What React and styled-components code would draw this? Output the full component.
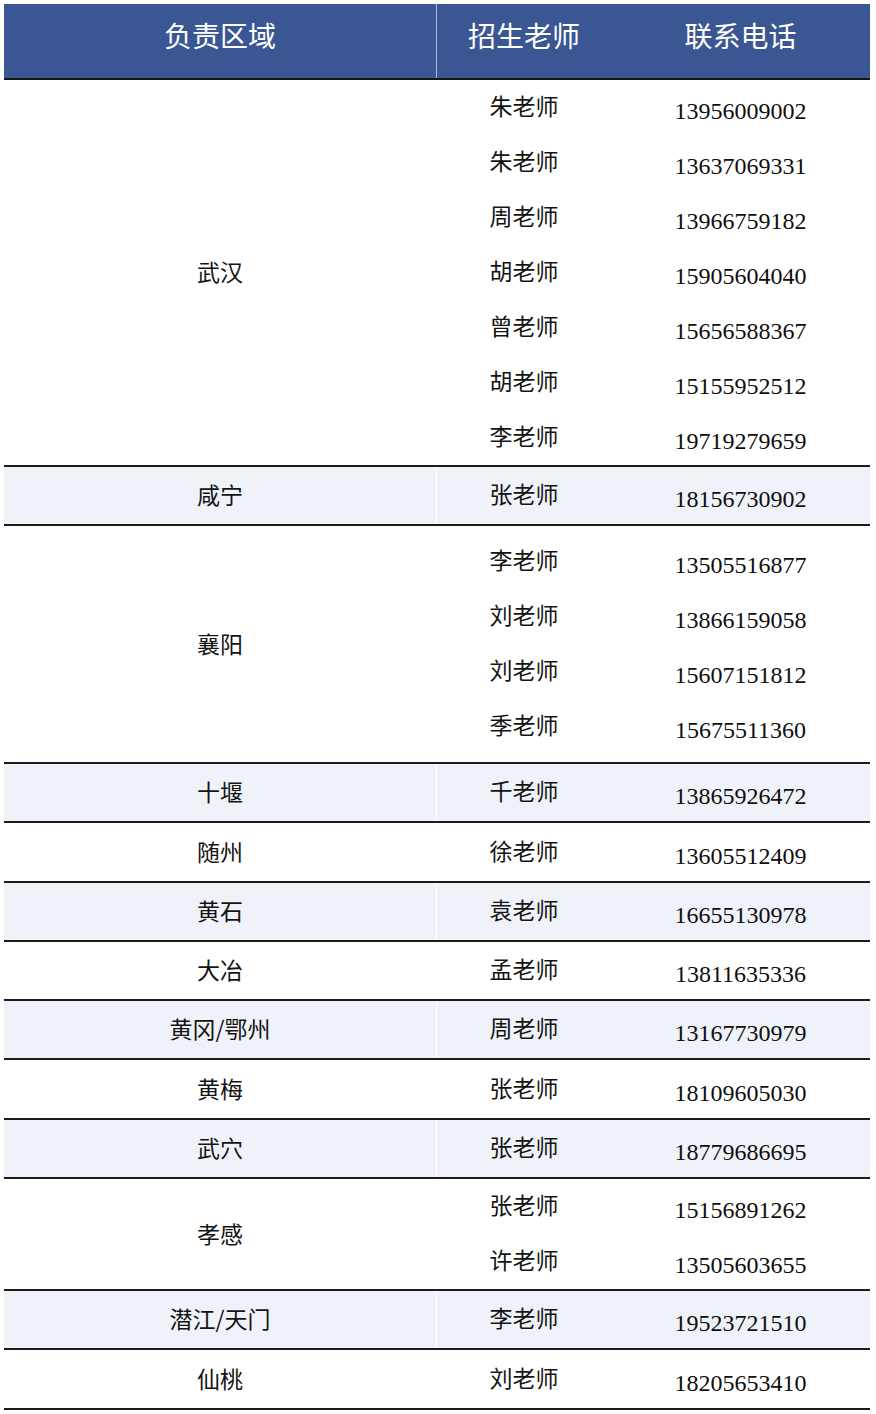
import React from 'react'
import styled, { createGlobalStyle } from 'styled-components';

const GlobalStyle = createGlobalStyle`
    body {
        margin: 0;
        padding: 4px;
        background: #ffffff;
        font-family: "Liberation Serif", "Noto Sans CJK SC", serif;
        color: #141414;
    }
`

// region -> list of [teacher, phone]
const groups = [
    { area: '武汉', pad: 0, rows: [
        ['朱老师', '13956009002'],
        ['朱老师', '13637069331'],
        ['周老师', '13966759182'],
        ['胡老师', '15905604040'],
        ['曾老师', '15656588367'],
        ['胡老师', '15155952512'],
        ['李老师', '19719279659'],
    ] },
    { area: '咸宁', h: 57, rows: [['张老师', '18156730902']] },
    { area: '襄阳', pad: 8, rows: [
        ['李老师', '13505516877'],
        ['刘老师', '13866159058'],
        ['刘老师', '15607151812'],
        ['季老师', '15675511360'],
    ] },
    { area: '十堰', h: 57, rows: [['千老师', '13865926472']] },
    { area: '随州', h: 58, rows: [['徐老师', '13605512409']] },
    { area: '黄石', h: 57, rows: [['袁老师', '16655130978']] },
    { area: '大冶', h: 57, rows: [['孟老师', '13811635336']] },
    { area: '黄冈/鄂州', h: 57, rows: [['周老师', '13167730979']] },
    { area: '黄梅', h: 58, rows: [['张老师', '18109605030']] },
    { area: '武穴', h: 57, rows: [['张老师', '18779686695']] },
    { area: '孝感', pad: 0, rows: [
        ['张老师', '15156891262'],
        ['许老师', '13505603655'],
    ] },
    { area: '潜江/天门', h: 57, rows: [['李老师', '19523721510']] },
    { area: '仙桃', h: 58, rows: [['刘老师', '18205653410']] },
]

function App() {
    return (
        <>
            <GlobalStyle />
            <Table>
                <Header>
                    <HeadCell>负责区域</HeadCell>
                    <HeadCell>招生老师</HeadCell>
                    <HeadCell>联系电话</HeadCell>
                </Header>
                {groups.map((g, i) => (
                    <Group key={g.area} shaded={i % 2 === 1}>
                        <AreaCell shaded={i % 2 === 1}>{g.area}</AreaCell>
                        <SubList pad={g.pad || 0}>
                            {g.rows.map(([name, phone], j) => (
                                <SubRow key={j} single={g.rows.length === 1} h={g.h}>
                                    <Name>{name}</Name>
                                    <Phone>{phone}</Phone>
                                </SubRow>
                            ))}
                        </SubList>
                    </Group>
                ))}
            </Table>
        </>
    )
}

export default App;

const Table = styled.div`
    width: 866px;
    display: flex;
    flex-direction: column;
`

const Header = styled.div`
    display: grid;
    grid-template-columns: 433px 174px 259px;
    height: 74px;
    background-color: #3a5693;
    border-bottom: 2px solid #161616;
`

const HeadCell = styled.div`
    display: flex;
    align-items: center;
    justify-content: center;
    padding-bottom: 12px;
    color: #ffffff;
    font-family: "Noto Sans CJK SC", sans-serif;
    font-size: 28px;
    &:first-child {
        border-right: 1px solid #a9bada;
    }
`

const Group = styled.div`
    display: grid;
    grid-template-columns: 433px 433px;
    background-color: ${props => props.shaded ? '#eff2f8' : '#ffffff'};
    border-bottom: 2px solid #1c1c1c;
`

const AreaCell = styled.div`
    display: flex;
    align-items: center;
    justify-content: center;
    padding-bottom: 3px;
    font-family: "Noto Sans CJK SC", sans-serif;
    font-size: 23px;
    border-right: 1px solid ${props => props.shaded ? '#ffffff' : 'transparent'};
`

const SubList = styled.div`
    display: flex;
    flex-direction: column;
    padding: ${props => props.pad}px 0;
`

const SubRow = styled.div`
    display: grid;
    grid-template-columns: 174px 259px;
    height: ${props => props.single ? props.h : 55}px;
    align-items: center;
`

const Name = styled.div`
    text-align: center;
    font-family: "Noto Sans CJK SC", sans-serif;
    font-size: 23px;
    margin-top: -5px;
`

const Phone = styled.div`
    text-align: center;
    font-family: "Liberation Serif", serif;
    font-size: 24px;
    margin-top: 8px;
    color: #0e0e0e;
`
